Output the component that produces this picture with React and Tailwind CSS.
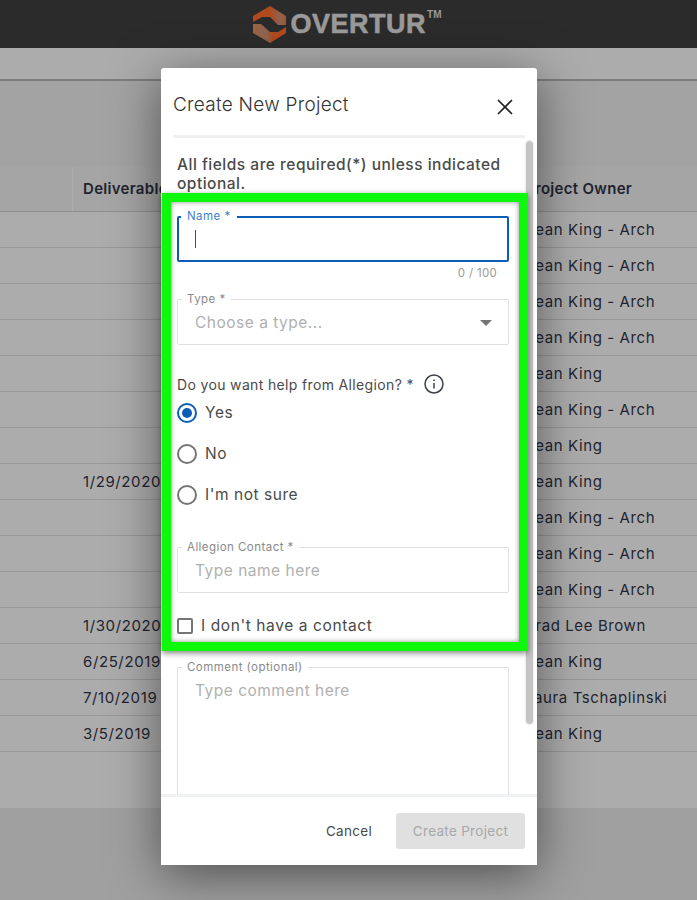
import React from "react";
import { X } from "lucide-react";

const rows = [
  ["", "Sean King - Arch"],
  ["", "Sean King - Arch"],
  ["", "Sean King - Arch"],
  ["", "Sean King - Arch"],
  ["", "Sean King"],
  ["", "Sean King - Arch"],
  ["", "Sean King"],
  ["1/29/2020", "Sean King"],
  ["", "Sean King - Arch"],
  ["", "Sean King - Arch"],
  ["", "Sean King - Arch"],
  ["1/30/2020", "Brad Lee Brown"],
  ["6/25/2019", "Sean King"],
  ["7/10/2019", "Laura Tschaplinski"],
  ["3/5/2019", "Sean King"],
];

function Logo() {
  return (
    <div className="flex items-center">
      <svg width="34" height="37" viewBox="0 0 34 37">
        <defs>
          <linearGradient id="foldTop" x1="0" y1="0" x2="1" y2="0">
            <stop offset="0.5" stopColor="#b04a1c" />
            <stop offset="0.85" stopColor="#8c6453" />
            <stop offset="1" stopColor="#a3542c" />
          </linearGradient>
          <linearGradient id="foldBottom" x1="0" y1="0" x2="1" y2="0">
            <stop offset="0" stopColor="#a0623f" />
            <stop offset="0.4" stopColor="#8c6453" />
            <stop offset="0.6" stopColor="#b04a1c" />
          </linearGradient>
        </defs>
        <path d="M0 10 L17 0 L33 10 L33 19 L25 19 L17 11 L9 11 L0 16 Z" fill="url(#foldTop)" />
        <path d="M33 27 L17 37 L0 27 L0 18 L8 18 L17 26 L25 26 L33 21 Z" fill="url(#foldBottom)" />
      </svg>
      <span className="ml-[4px] text-[27px] leading-none font-bold tracking-[0.5px] text-[#9a9a9a] [-webkit-text-stroke:0.6px_#9a9a9a] font-['Liberation_Sans',sans-serif]">
        OVERTUR
      </span>
      <span className="self-start mt-[4px] ml-px text-[10px] leading-none font-bold text-[#9a9a9a] font-['Liberation_Sans',sans-serif]">
        TM
      </span>
    </div>
  );
}

function Radio({ label, checked }) {
  return (
    <div className="flex items-center gap-[8px] h-[20px]">
      <span
        className={`w-[20px] h-[20px] rounded-full border-2 flex items-center justify-center ${
          checked ? "border-[#0d5cb5]" : "border-[#757575]"
        }`}
      >
        {checked && <span className="w-[10px] h-[10px] rounded-full bg-[#0d5cb5]" />}
      </span>
      <span className="text-[15.5px] text-[#4a4a4a] tracking-[0.55px]">{label}</span>
    </div>
  );
}

function Field({ label, placeholder, className, children }) {
  return (
    <div className={`relative border border-[#e0e0e0] rounded-[2px] px-[17px] ${className}`}>
      <span className="absolute -top-[8px] left-[4px] bg-white px-[5px] text-[11.5px] leading-[14px] text-[#8a8a8a] tracking-[0.45px]">
        {label}
      </span>
      <div className="text-[15.5px] leading-[20px] text-[#b0b0b0] tracking-[0.5px] pt-[13px]">{placeholder}</div>
      {children}
    </div>
  );
}

export default function App() {
  return (
    <div className="relative w-[697px] h-[900px] overflow-hidden bg-[#a0a0a0] font-['Inter',sans-serif]">
      {/* page behind the dialog */}
      <header className="h-[48px] bg-[#2b2b2b] flex justify-center items-center pr-[3px]">
        <Logo />
      </header>
      <div className="h-[33px] bg-[#acacac] border-b-2 border-[#7c7c7c]" />
      <div className="h-[86px] bg-[#a3a3a3]" />
      <div className="bg-[#acacac]">
        <div className="flex h-[45px] items-center border-b border-[#8f8f8f] bg-[#a5a5a5] text-[15px] font-semibold text-[#1f2430] tracking-[0.3px]">
          <div className="w-[73px] h-full border-r border-[#aeaeae]" />
          <div className="w-[452px] pl-[10px] whitespace-nowrap">Deliverable</div>
          <div className="whitespace-nowrap">Project Owner</div>
        </div>
        {rows.map((r, i) => (
          <div key={i} className="flex h-[36px] items-center pt-[2px] border-b border-[#979797] text-[15px] text-[#1f2430] tracking-[0.6px]">
            <div className="w-[73px]" />
            <div className="w-[452px] pl-[10px]">{r[0]}</div>
            <div className="whitespace-nowrap">{r[1]}</div>
          </div>
        ))}
        <div className="h-[56px]" />
      </div>

      {/* dialog */}
      <div className="absolute left-[161px] top-[68px] w-[376px] h-[797px] bg-white rounded-[3px] shadow-[0_10px_50px_rgba(0,0,0,0.5)] flex flex-col">
        <div className="h-[70px] mx-[12px] shrink-0 border-b-[3px] border-[#f0f0f0] flex items-center justify-between pt-[7px]">
          <h2 className="text-[19px] font-light text-[#333333] tracking-[0.25px]">Create New Project</h2>
          <X size={26} strokeWidth={1.6} className="text-[#222222] mr-[7px] mt-[4px]" />
        </div>

        <div className="relative flex-1 overflow-hidden pl-[16px] pr-[28px]">
          <p className="pt-[17px] text-[15.5px] leading-[19px] font-medium text-[#4a4a4a] tracking-[0.5px]">
            All fields are required(*) unless indicated optional.
          </p>

          <div className="mt-[23px] relative h-[46px] border-2 border-[#0d5cb5] rounded-[2px] flex items-center pl-[16px]">
            <span className="absolute -top-[9px] left-[2px] bg-white px-[6px] text-[11.5px] leading-[14px] text-[#3f7fd0] tracking-[0.45px]">
              Name *
            </span>
            <span className="w-px h-[18px] bg-[#0d5cb5]" />
          </div>
          <div className="mt-[4px] pr-[12px] text-right text-[11.5px] leading-[14px] text-[#9a9a9a] tracking-[0.3px]">0 / 100</div>

          <Field label="Type *" placeholder="Choose a type..." className="mt-[19px] h-[46px]">
            <span className="absolute right-[16px] top-[20px] border-x-[6px] border-x-transparent border-t-[6px] border-t-[#757575]" />
          </Field>

          <div className="mt-[29px] flex items-center gap-[10px] h-[20px]">
            <span className="text-[14px] text-[#4a4a4a] tracking-[0.35px]">Do you want help from Allegion? *</span>
            <svg width="20" height="20" viewBox="0 0 20 20" fill="none" stroke="#3a3f4a" strokeWidth="1.5">
              <circle cx="10" cy="10" r="9" />
              <path d="M10 9v5.5" />
              <path d="M10 5.4v1.6" />
            </svg>
          </div>

          <div className="mt-[9px] flex flex-col gap-[21px]">
            <Radio label="Yes" checked />
            <Radio label="No" />
            <Radio label="I'm not sure" />
          </div>

          <Field label="Allegion Contact *" placeholder="Type name here" className="mt-[42px] h-[46px]" />

          <div className="mt-[23px] flex items-center gap-[8px] h-[20px]">
            <span className="w-[16px] h-[16px] border-2 border-[#757575] rounded-[2px]" />
            <span className="text-[15.5px] text-[#4a4a4a] tracking-[0.6px]">I don't have a contact</span>
          </div>

          <Field label="Comment (optional)" placeholder="Type comment here" className="mt-[31px] h-[200px]" />

          {/* scrollbar */}
          <div className="absolute right-[3px] top-[2px] w-[9px] h-[585px] rounded-full bg-[#c4c4c4] border border-[#f0f0f0]" />
        </div>

        <div className="h-[71px] shrink-0 border-t-[3px] border-[#f0f1f3] flex items-center justify-end pr-[12px] bg-white">
          <span className="text-[13.5px] text-[#4a4a4a] tracking-[0.3px] mr-[24px]">Cancel</span>
          <div className="w-[129px] h-[36px] rounded-[3px] bg-[#e0e0e0] flex items-center justify-center text-[13.5px] text-[#a8a8a8] tracking-[0.3px]">
            Create Project
          </div>
        </div>
      </div>

      {/* green highlight drawn over the form */}
      <div className="absolute left-[162px] top-[193px] w-[366px] h-[458px] border-[9px] border-[#0cf90c] shadow-[0_2px_6px_rgba(0,0,0,0.5),inset_0_0_5px_rgba(0,0,0,0.45)]" />
    </div>
  );
}
